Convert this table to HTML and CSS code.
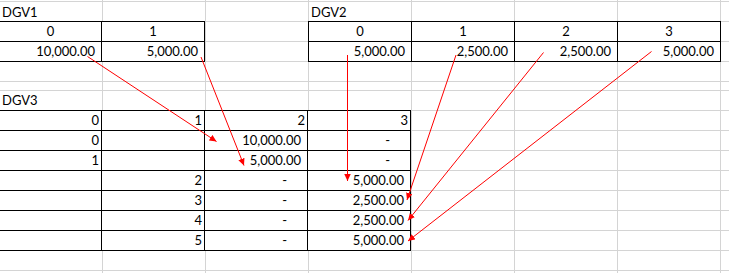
FILE: index.html
```html
<!DOCTYPE html>
<html lang="en">
<head>
<meta charset="utf-8">
<title>DGV sheet</title>
<link rel="stylesheet" href="styles.css">
</head>
<body>
<div class="sheet">
  <div class="label label-top col-a">DGV1</div>
  <div class="label label-top col-d">DGV2</div>

  <div class="tbl tbl-edge tbl-dgv1">
    <div class="cell c">0</div><div class="cell c">1</div>
    <div class="cell r">10,000.00</div><div class="cell r">5,000.00</div>
  </div>

  <div class="tbl tbl-dgv2">
    <div class="cell c">0</div><div class="cell c">1</div><div class="cell c">2</div><div class="cell c">3</div>
    <div class="cell r">5,000.00</div><div class="cell r">2,500.00</div><div class="cell r">2,500.00</div><div class="cell r">5,000.00</div>
  </div>

  <div class="label label-dgv3">DGV3</div>

  <div class="tbl tbl-edge tbl-dgv3">
    <div class="cell n">0</div><div class="cell n">1</div><div class="cell n">2</div><div class="cell n">3</div>
    <div class="cell n">0</div><div class="cell"></div><div class="cell r">10,000.00</div><div class="cell d">-</div>
    <div class="cell n">1</div><div class="cell"></div><div class="cell r">5,000.00</div><div class="cell d">-</div>
    <div class="cell"></div><div class="cell n">2</div><div class="cell d">-</div><div class="cell r">5,000.00</div>
    <div class="cell"></div><div class="cell n">3</div><div class="cell d">-</div><div class="cell r">2,500.00</div>
    <div class="cell"></div><div class="cell n">4</div><div class="cell d">-</div><div class="cell r">2,500.00</div>
    <div class="cell"></div><div class="cell n">5</div><div class="cell d">-</div><div class="cell r">5,000.00</div>
  </div>
</div>

<svg class="arrows" width="729" height="273" viewBox="0 0 729 273" xmlns="http://www.w3.org/2000/svg">
  <defs>
    <marker id="head" markerUnits="userSpaceOnUse" markerWidth="8" markerHeight="7" refX="7" refY="3.25" orient="auto">
      <path d="M0,0 L7,3.25 L0,6.5 z" fill="#ff0000"/>
    </marker>
  </defs>
  <g stroke="#ff0000" stroke-width="1" fill="none" marker-end="url(#head)">
    <line x1="87.5" y1="56.5" x2="216.5" y2="141.5"/>
    <line x1="201" y1="57" x2="244" y2="165.5"/>
    <line x1="347.5" y1="55" x2="347.5" y2="181"/>
    <line x1="456" y1="55" x2="407" y2="200"/>
    <line x1="543.5" y1="52.5" x2="408" y2="220.5"/>
    <line x1="651.5" y1="51.5" x2="408" y2="241"/>
  </g>
</svg>
</body>
</html>
```

FILE: styles.css
```css
html, body {
  margin: 0;
  padding: 0;
  background: #ffffff;
}

body {
  position: relative;
  width: 729px;
  height: 273px;
  overflow: hidden;
  font-family: "Lato", "Liberation Sans", sans-serif;
  font-size: 13px;
  color: #000000;
}

/* Spreadsheet grid: first column is cut by the window edge */
.sheet {
  width: 729px;
  height: 273px;
  display: grid;
  grid-template-columns: 102px repeat(6, 103px) 9px;
  grid-template-rows: 1px repeat(4, 20px) 9px repeat(9, 20px) 3px;
  background-image:
    linear-gradient(to right, #d4d4d4 1px, transparent 1px),
    repeating-linear-gradient(to bottom, #d4d4d4 0 1px, transparent 1px 20px),
    repeating-linear-gradient(to bottom, #d4d4d4 0 1px, transparent 1px 20px);
  background-size: 103px 100%, 100% 81px, 100% 181px;
  background-position: 102px 0, 0 1px, 0 90px;
  background-repeat: repeat-x, no-repeat, no-repeat;
}

.label {
  padding: 1px 0 0 2px;
  line-height: 19px;
  white-space: nowrap;
}

.label-top {
  grid-row: 2;
  padding-top: 2px;
}

.col-a { grid-column: 1; }
.col-d { grid-column: 4; padding-left: 3px; }

.label-dgv3 {
  grid-column: 1;
  grid-row: 7;
}

.tbl {
  display: grid;
  grid-template-columns: repeat(var(--cols), 103px);
  grid-auto-rows: 20px;
  border-top: 1px solid #000;
  border-left: 1px solid #000;
  justify-self: start;
  align-self: start;
  background: #ffffff;
}

/* tables whose left border lies just outside the window */
.tbl-edge {
  border-left: 0;
  grid-template-columns: 102px repeat(calc(var(--cols) - 1), 103px);
}

.tbl-dgv1 {
  --cols: 2;
  grid-column: 1 / span 2;
  grid-row: 3 / span 2;
}

.tbl-dgv2 {
  --cols: 4;
  grid-column: 4 / span 4;
  grid-row: 3 / span 2;
}

.tbl-dgv3 {
  --cols: 4;
  grid-column: 1 / span 4;
  grid-row: 8 / span 7;
}

.cell {
  box-sizing: border-box;
  border-right: 1px solid #000;
  border-bottom: 1px solid #000;
  line-height: 19px;
  white-space: nowrap;
  overflow: hidden;
}

.c { text-align: center; }
.r { text-align: right; padding-right: 6px; }
.n { text-align: right; padding-right: 2px; }
.d { text-align: right; padding-right: 20px; }

.arrows {
  position: absolute;
  left: 0;
  top: 0;
  pointer-events: none;
}
```
